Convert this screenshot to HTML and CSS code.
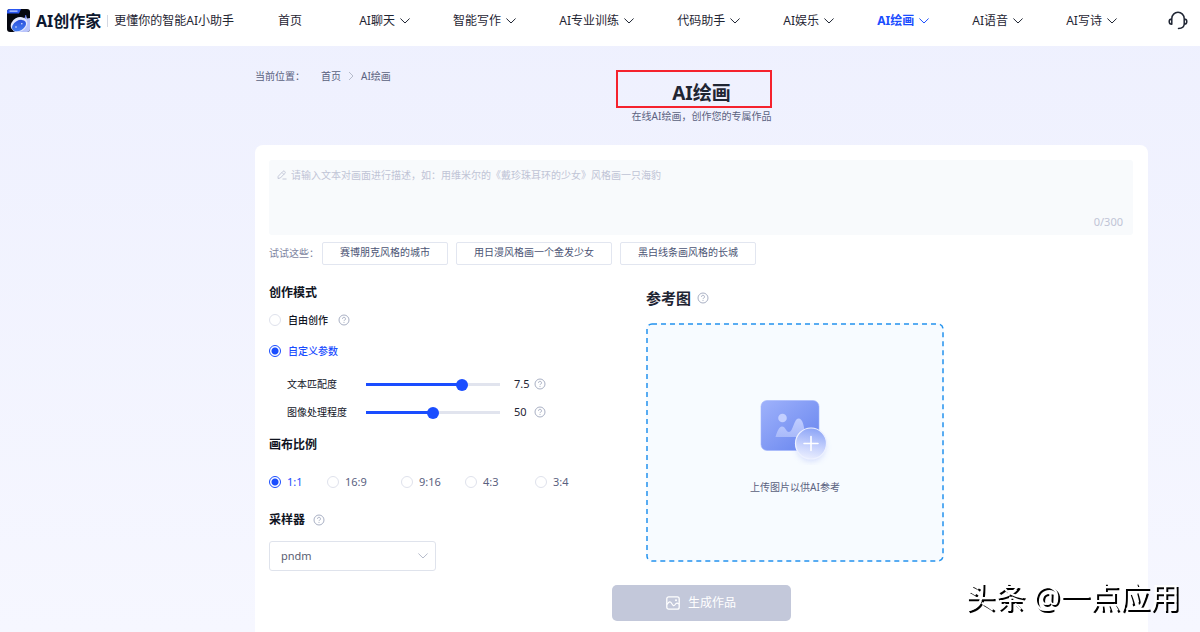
FILE: index.html
```html
<!DOCTYPE html>
<html lang="zh-CN">
<head>
<meta charset="utf-8">
<title>AI绘画</title>
<link rel="stylesheet" href="styles.css">
</head>
<body>
<svg class="defs" aria-hidden="true">
  <symbol id="chevron" viewBox="0 0 10 6"><path d="M.7.8 5 5 9.300.8" fill="none" stroke="currentColor" stroke-linecap="round" stroke-linejoin="round"/></symbol>
  <symbol id="help" viewBox="0 0 12 12"><circle cx="6" cy="6" r="5" fill="none" stroke="currentColor"/><path d="M4.500 4.800a1.500 1.500 0 1 1 2.200 1.300c-.5.3-.7.5-.7 1" fill="none" stroke="currentColor"/><circle cx="6" cy="8.500" r=".6" fill="currentColor"/></symbol>
</svg>

<header class="topbar">
  <a class="brand" href="#">
    <svg class="brand-logo" viewBox="0 0 23 23" aria-hidden="true">
      <defs>
        <clipPath id="logo-clip"><rect width="23" height="23" rx="3"/></clipPath>
        <linearGradient id="visor" x1="0" y1="1" x2="1" y2="0"><stop offset="0" stop-color="#4a86f5"/><stop offset="1" stop-color="#2447d8"/></linearGradient>
      </defs>
      <g clip-path="url(#logo-clip)">
        <rect width="23" height="23" fill="#05070f"/>
        <path d="M0 0h14l-2 4.500H0z" fill="#2a56f0"/>
        <path d="M2.500 2.200h8" stroke="#c9d6ff" stroke-width="1.200"/>
        <path d="M17.500 9 19 6.500l1 3L23 9v14H6l10-4z" fill="#b9c4fb"/>
        <path d="M18 10l.8-4" stroke="#5d74e8"/>
        <ellipse cx="12" cy="15.500" rx="8.600" ry="7" fill="#e3e8fd" transform="rotate(-28 12 15.500)"/>
        <ellipse cx="12" cy="16.600" rx="7.500" ry="5" fill="url(#visor)" transform="rotate(-30 12 16.600)"/>
        <circle cx="9" cy="18" r=".8" fill="#dfe8ff"/><circle cx="14.800" cy="14.800" r=".8" fill="#dfe8ff"/>
      </g>
    </svg>
    <span class="brand-name">AI创作家</span>
    <span class="brand-slogan">更懂你的智能AI小助手</span>
  </a>
  <nav class="nav">
    <a class="nav-item nav-home" href="#">首页</a>
    <a class="nav-item" href="#">AI聊天<svg class="chevron"><use href="#chevron"/></svg></a>
    <a class="nav-item" href="#">智能写作<svg class="chevron"><use href="#chevron"/></svg></a>
    <a class="nav-item" href="#">AI专业训练<svg class="chevron"><use href="#chevron"/></svg></a>
    <a class="nav-item" href="#">代码助手<svg class="chevron"><use href="#chevron"/></svg></a>
    <a class="nav-item" href="#">AI娱乐<svg class="chevron"><use href="#chevron"/></svg></a>
    <a class="nav-item nav-active" href="#">AI绘画<svg class="chevron"><use href="#chevron"/></svg></a>
    <a class="nav-item" href="#">AI语音<svg class="chevron"><use href="#chevron"/></svg></a>
    <a class="nav-item" href="#">AI写诗<svg class="chevron"><use href="#chevron"/></svg></a>
  </nav>
  <button class="support" type="button" aria-label="客服">
    <svg viewBox="0 0 20 20" aria-hidden="true"><path d="M3.800 8V7.500a6.200 6.200 0 0 1 12.400 0V13c0 2.500-2 4.300-5.700 4.500M3.800 8C1.900 8 1.200 9 1.200 10.500s.7 2.800 2.600 2.800zM16.200 8c1.900 0 2.600 1 2.600 2.500s-.7 2.800-2.600 2.800" fill="none" stroke="currentColor" stroke-width="1.500" stroke-linecap="round" stroke-linejoin="round"/></svg>
  </button>
</header>

<main class="page">
  <div class="intro">
    <div class="crumbs">
      <span>当前位置：</span>
      <a href="#">首页</a>
      <svg class="crumb-arrow" viewBox="0 0 6 10" aria-hidden="true"><path d="M1 1l4 4-4 4" fill="none" stroke="currentColor"/></svg>
      <a href="#">AI绘画</a>
    </div>
    <div class="heading">
      <h1>AI绘画</h1>
      <p>在线AI绘画，创作您的专属作品</p>
      <span class="marker"></span>
    </div>
  </div>

  <form class="card">
    <div class="prompt">
      <svg class="pencil" viewBox="0 0 10 10" aria-hidden="true"><path d="M1.200 6.300 6 1.300q.8-.7 1.600 0l.4.500q.6.700-.1 1.500L3.300 8 1 8.500zM5.500 9h4M5 2.500l2 2" fill="none" stroke="currentColor" stroke-width=".9"/></svg>
      <textarea aria-label="画面描述" placeholder="请输入文本对画面进行描述，如：用维米尔的《戴珍珠耳环的少女》风格画一只海豹"></textarea>
      <span class="counter">0/300</span>
    </div>
    <div class="tries">
      <span>试试这些：</span>
      <button type="button">赛博朋克风格的城市</button>
      <button type="button">用日漫风格画一个金发少女</button>
      <button type="button">黑白线条画风格的长城</button>
    </div>

    <div class="columns">
      <div class="settings">
        <h2>创作模式</h2>
        <div class="row mode-free">
          <label><input type="radio" name="mode">自由创作</label>
          <svg class="help"><use href="#help"/></svg>
        </div>
        <div class="row mode-custom">
          <label><input type="radio" name="mode" checked>自定义参数</label>
        </div>
        <div class="row slider">
          <label for="match">文本匹配度</label>
          <input id="match" type="range" min="0" max="10" step="0.1" value="7.4" style="--fill:73%">
          <output for="match">7.5</output>
          <svg class="help"><use href="#help"/></svg>
        </div>
        <div class="row slider">
          <label for="process">图像处理程度</label>
          <input id="process" type="range" min="0" max="100" value="50" style="--fill:50%">
          <output for="process">50</output>
          <svg class="help"><use href="#help"/></svg>
        </div>
        <h2 class="ratio-title">画布比例</h2>
        <div class="ratios">
          <label><input type="radio" name="ratio" checked>1:1</label>
          <label><input type="radio" name="ratio">16:9</label>
          <label><input type="radio" name="ratio">9:16</label>
          <label><input type="radio" name="ratio">4:3</label>
          <label><input type="radio" name="ratio">3:4</label>
        </div>
        <div class="row sampler-title">
          <h2><label for="sampler">采样器</label></h2>
          <svg class="help"><use href="#help"/></svg>
        </div>
        <div class="select">
          <select id="sampler"><option>pndm</option></select>
          <svg class="chevron"><use href="#chevron"/></svg>
        </div>
      </div>

      <div class="reference">
        <div class="row">
          <h2>参考图</h2>
          <svg class="help"><use href="#help"/></svg>
        </div>
        <button class="upload" type="button">
          <svg class="upload-frame" aria-hidden="true"><rect width="100%" height="100%" rx="5"/></svg>
          <svg class="upload-art" viewBox="0 0 76 70" aria-hidden="true">
            <defs>
              <linearGradient id="pic" x1="0" y1="0" x2="1" y2="1"><stop offset="0" stop-color="#9fb2fb"/><stop offset="1" stop-color="#6583ee"/></linearGradient>
              <linearGradient id="hill" x1="0" y1="0" x2="0" y2="1"><stop offset="0" stop-color="#c0cdff"/><stop offset="1" stop-color="#a9bafa"/></linearGradient>
              <linearGradient id="plus" x1=".6" y1="0" x2=".4" y2="1"><stop offset="0" stop-color="#8ba3f6"/><stop offset=".6" stop-color="#c8d3fd"/><stop offset="1" stop-color="#eaeefe"/></linearGradient>
              <filter id="soft" x="-50%" y="-50%" width="200%" height="200%"><feGaussianBlur stdDeviation="3"/></filter>
            </defs>
            <rect x="4" y="5.500" width="58" height="50" rx="6" fill="url(#pic)" stroke="#a3b5fb" stroke-width=".6"/>
            <circle cx="25.500" cy="23" r="4.300" fill="#c3cfff"/>
            <path d="M18.500 42c1.500-5 3.500-10.500 6.500-10.500 3.500 0 4 5.500 7 5.500 4 0 5-13.500 9.500-13.500s5.500 8 7 18.500z" fill="url(#hill)"/>
            <circle cx="54" cy="52" r="14" fill="#93a6f7" opacity=".4" filter="url(#soft)"/>
            <circle cx="54" cy="48.500" r="15.500" fill="url(#plus)" stroke="#edf1ff" stroke-width="1.200"/>
            <path d="M47 48.500h14M54 41.500v14" stroke="#fff" stroke-width="1.600" stroke-linecap="round"/>
          </svg>
          <span>上传图片以供AI参考</span>
        </button>
      </div>
    </div>

    <button class="generate" type="button">
      <svg viewBox="0 0 14 14" aria-hidden="true"><rect x=".8" y=".8" width="12.400" height="12.400" rx="2" fill="none" stroke="currentColor" stroke-width="1.300"/><path d="M1 8.500C3 5 4.500 5.200 5.700 7.500S8 10.500 9.200 8.500s2.300-1.700 3.800-.5" fill="none" stroke="currentColor" stroke-width="1.200"/><circle cx="10" cy="4.200" r="1" fill="currentColor"/></svg>
      生成作品
    </button>
  </form>
</main>
<div class="watermark">头条 @一点应用</div>
</body>
</html>
```

FILE: styles.css
```css
* { box-sizing: border-box; }

body {
  display: flex;
  flex-direction: column;
  min-height: 100vh;
  margin: 0;
  background: linear-gradient(#eef0fe, #f6f7ff);
  color: #1f2533;
  font: 10px/20px "Noto Sans", "Noto Sans CJK SC", sans-serif;
}

a { color: inherit; text-decoration: none; }
button, textarea, select { font: inherit; color: inherit; }
h1, h2, p { margin: 0; }
.defs { position: absolute; width: 0; height: 0; }

.topbar {
  display: flex;
  align-items: center;
  height: 46px;
  padding: 0 12px 5px 7px;
  background: #fff;
  font-size: 12px;
  white-space: nowrap;
}
.brand { display: flex; align-items: center; }
.brand-logo { width: 23px; height: 23px; margin-right: 6px; }
.brand-name { font-size: 16px; font-weight: 700; color: #0d1830; }
.brand-slogan {
  margin-left: 6px;
  padding-left: 7px;
  background: linear-gradient(#d5d8e2, #d5d8e2) left center / 1px 12px no-repeat;
}
.nav { display: flex; flex: 1; justify-content: space-between; margin: 0 51px 0 44px; }
.nav-item { display: flex; align-items: center; gap: 5px; }
.nav-home { padding-right: 14px; }
.nav-active { color: #1a4dff; font-weight: 700; }
.chevron { width: 10px; height: 6px; }
.support { width: 20px; height: 20px; padding: 0; border: 0; background: none; }
.support svg { display: block; }

.page { display: flex; flex: 1; flex-direction: column; padding: 0 52px 0 255px; }
.intro { position: relative; height: 99px; color: #5a6180; }
.crumbs { position: absolute; top: 20px; left: 0; display: flex; align-items: center; }
.crumbs span { width: 66px; }
.crumb-arrow { width: 6px; height: 10px; margin: 0 7px; color: #b6bccb; }
.heading { position: relative; width: 156px; margin: 0 auto; padding-top: 34px; text-align: center; }
.heading h1 { font-size: 19px; line-height: 26px; color: #1f2533; }
.marker {
  position: absolute;
  top: 24px;
  right: 8px;
  width: 156px;
  height: 38px;
  border: 2px solid #f5222d;
}

.card {
  display: flex;
  flex: 1;
  flex-direction: column;
  padding: 15px 15px 11px 14px;
  border-radius: 8px 8px 0 0;
  background: #fff;
}
.prompt {
  display: flex;
  gap: 4px;
  height: 75px;
  padding: 5px 10px 3px 8px;
  border-radius: 3px;
  background: #f8fafc;
  color: #c0c4d6;
}
.pencil { width: 10px; height: 10px; margin-top: 5px; }
.prompt textarea {
  flex: 1;
  padding: 0;
  border: 0;
  outline: 0;
  background: none;
  color: #3b4260;
  resize: none;
}
.prompt textarea::placeholder { color: #c0c4d6; }
.counter { align-self: flex-end; font-size: 11px; }

.tries { display: flex; gap: 8px; margin-top: 7px; color: #7d849f; line-height: 22px; }
.tries span { width: 45px; white-space: nowrap; }
.tries button {
  height: 23px;
  padding: 0 17px 2px;
  border: 1px solid #e2e6f0;
  border-radius: 2px;
  background: #fff;
  color: #4c5475;
  line-height: 19px;
}

.columns { display: grid; grid-template-columns: 377px minmax(0, 298px); }
.settings { padding-top: 18px; }
.settings h2 { font-size: 12px; line-height: 20px; color: #10141f; }
.row { display: flex; align-items: center; height: 20px; }
.help { width: 12px; height: 12px; color: #a9b0c4; }
input[type="radio"] {
  appearance: none;
  width: 12px;
  height: 12px;
  margin: 0;
  border: 1px solid #dfe2ec;
  border-radius: 50%;
  background: #fff;
}
input[type="radio"]:checked {
  border-color: #1a4dff;
  background: radial-gradient(circle, #1a4dff 3px, #fff 4px);
}
.row label { display: flex; align-items: center; gap: 7px; color: #10141f; }
.mode-free, .mode-custom { gap: 10px; font-weight: 500; }
.mode-free { margin-top: 7px; }
.mode-custom { margin: 11px 0 13px; }
.mode-custom label { color: #1a4dff; }

.slider { margin-bottom: 8px; padding-left: 18px; }
.slider label { width: 79px; }
.slider output { width: 20px; margin-left: 14px; font-size: 11px; }
input[type="range"] {
  appearance: none;
  width: 134px;
  height: 14px;
  margin: 0;
  padding-top: 2px;
  background: linear-gradient(to right, #1a4dff var(--fill), #e1e4ee var(--fill)) left 6px / 100% 3px no-repeat;
}
input[type="range"]::-webkit-slider-thumb {
  appearance: none;
  width: 12px;
  height: 12px;
  border-radius: 50%;
  background: #1a4dff;
}

.settings .ratio-title { margin-top: 13px; }
.ratios {
  display: grid;
  grid-template-columns: 58px 74px 64px 70px auto;
  margin: 17px 0 18px;
  font-size: 11px;
  color: #5a6180;
}
.ratios label { display: flex; align-items: center; gap: 6px; }
.ratios label:has(:checked) { color: #1a4dff; }
.sampler-title { gap: 8px; }
.select { position: relative; width: 167px; margin-top: 11px; }
.select select {
  appearance: none;
  display: block;
  width: 100%;
  height: 30px;
  padding: 0 11px 1px;
  border: 1px solid #dfe3ec;
  border-radius: 3px;
  background: #fff;
  color: #5a6072;
  font-size: 11px;
}
.select .chevron { position: absolute; top: 12px; right: 8px; color: #b6bccb; pointer-events: none; }

.reference { padding-top: 23px; }
.reference .row { gap: 6px; }
.reference h2 { font-size: 15px; }
.upload {
  position: relative;
  display: flex;
  flex-direction: column;
  align-items: center;
  width: 100%;
  height: 239px;
  margin-top: 15px;
  padding: 72px 0 0;
  border: 0;
  border-radius: 6px;
  background: #f7fbff;
  color: #5a6180;
}
.upload-frame {
  position: absolute;
  inset: 1px;
  width: calc(100% - 2px);
  height: calc(100% - 2px);
  overflow: visible;
  fill: none;
  stroke: #2493ee;
  stroke-width: 1.5;
  stroke-dasharray: 5 4;
}
.upload-art { width: 76px; height: 70px; margin-bottom: 12px; }

.generate {
  display: flex;
  align-items: center;
  justify-content: center;
  align-self: center;
  gap: 8px;
  width: 179px;
  height: 36px;
  margin-top: 14px;
  border: 0;
  border-radius: 5px;
  background: #c3c8da;
  color: #fff;
  font-size: 12px;
}
.generate svg { width: 14px; height: 14px; }

.watermark {
  position: fixed;
  right: 20px;
  bottom: 15px;
  color: #fff;
  font-size: 30px;
  line-height: 40px;
  text-shadow: 2px 2px 0 #000;
}
```
